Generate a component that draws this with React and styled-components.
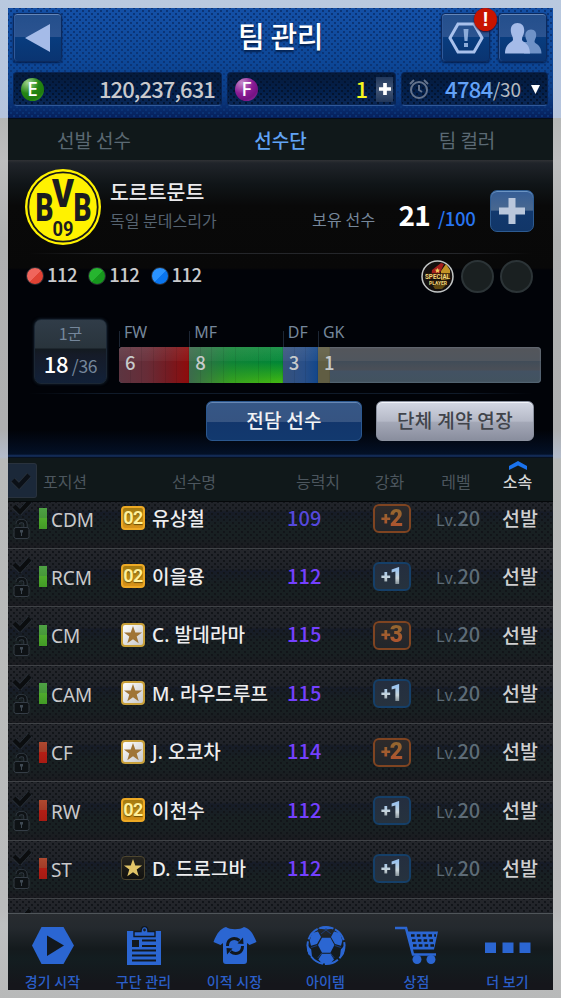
import React from 'react';
import styled, { createGlobalStyle, css } from 'styled-components';

const GlobalStyle = createGlobalStyle`
  * {
    box-sizing: border-box;
  }
  body {
    margin: 0;
    background: #b5b6b6;
    font-family: 'Noto Sans CJK KR', 'Noto Sans', sans-serif;
  }
  svg {
    display: block;
    flex: none;
  }
`;

const Frame = styled.div`
  width: 561px;
  height: 998px;
  padding: 8px;
  background: linear-gradient(#b9c9df 0, #b5c4dd 118px, #b5b7b6 118px, #bdbebf 160px, #b0b1b1 240px, #aeafb0 430px, #b3bccb 457px, #b8bab9 459px, #bbbcbd 910px, #bec0c1 925px, #b8b9b9 100%);
`;

const Screen = styled.div`
  height: 982px;
  overflow: hidden;
  display: flex;
  flex-direction: column;
  background: #010308;
`;

const dots = css`
  background-image: radial-gradient(circle, ${(p) => p.$dot} 0.7px, transparent 1.4px),
    radial-gradient(circle, ${(p) => p.$dot} 0.7px, transparent 1.4px), ${(p) => p.$fill};
  background-size: 6px 6px, 6px 6px, 100% 100%;
  background-position: 0 0, 3px 3px, 0 0;
`;

const Text = styled.span`
  margin-top: -2px;
  font-size: ${(p) => p.$size}px;
  line-height: 1;
  font-weight: ${(p) => p.$weight || 400};
  color: ${(p) => p.$color};
  letter-spacing: ${(p) => p.$spacing || 0}px;
  white-space: nowrap;
`;

/* ---------- header ---------- */

const Header = styled.header`
  height: 110px;
  flex: none;
  padding: 5px 5px 0;
  ${dots}
`;

const TitleBar = styled.div`
  display: grid;
  grid-template-columns: 107px 1fr 107px;
  height: 49px;
  align-items: center;
`;

const Title = styled.h1`
  margin: 0;
  padding-bottom: 5px;
  text-align: center;
  font-size: 29px;
  line-height: 44px;
  font-weight: 500;
  letter-spacing: -0.4px;
  color: #fff;
  text-shadow: 0 2px 2px #04204c;
`;

const HeaderActions = styled.div`
  display: flex;
  gap: 8px;
`;

const IconButton = styled.button`
  position: relative;
  width: 49px;
  height: 49px;
  flex: none;
  padding: 0;
  display: flex;
  align-items: center;
  justify-content: center;
  border: 1px solid #0b2a5f;
  border-radius: 4px;
  background: linear-gradient(#244f8c, #2b5390 48%, #083c7e 50%, #0a3471);
  box-shadow: inset 0 1px 0 #6586b8, inset 1px 0 0 #2f599a, 0 1px 2px #041c48;
`;

const Alert = styled.span`
  position: absolute;
  top: -6px;
  right: -8px;
  width: 23px;
  height: 23px;
  border-radius: 50%;
  background: #c81400;
  box-shadow: 0 1px 2px #24092a;
  color: #fff;
  font: 700 20px/23px 'Liberation Sans', sans-serif;
  text-align: center;
`;

const Wallets = styled.div`
  display: grid;
  grid-template-columns: 209px 169px 147px;
  gap: 5px;
  margin-top: 10px;
`;

const Wallet = styled.div`
  height: 34px;
  padding: 0 6px 0 7px;
  display: flex;
  align-items: center;
  border-radius: 4px;
  border: 1px solid #092454;
  border-bottom-color: #31599a;
  ${dots}
`;

const Coin = styled.span`
  width: 23px;
  height: 23px;
  margin-right: auto;
  border-radius: 50%;
  background: ${(p) => (p.$purple
    ? 'radial-gradient(circle at 30% 20%, #c68ac9, #8b1c96 45%, #751283 70%, #a33cae)'
    : 'radial-gradient(circle at 30% 20%, #a0d58e, #248513 45%, #1f7c0e 70%, #4abb2d)')};
  color: #fff;
  font: 500 19px/22px 'Noto Sans', sans-serif;
  text-align: center;
`;

const PlusBox = styled.span`
  width: 17px;
  height: 25px;
  margin: 0 -4px 0 7px;
  display: flex;
  align-items: center;
  justify-content: center;
  background: linear-gradient(#21375b, #415575, #21375b);
`;

/* ---------- tabs ---------- */

const Tabs = styled.nav`
  height: 42px;
  flex: none;
  display: grid;
  grid-template-columns: 172px 1fr 172px;
  justify-items: center;
  align-items: center;
  padding-top: 2px;
  border-top: 1px solid #050d1b;
  background: #10181a;
`;

/* ---------- team ---------- */

const Team = styled.section`
  height: 298px;
  flex: none;
  background: linear-gradient(#303235 0, #20242a 3px, #101518 24px, #090909 46px, #080808 108px, #010308 110px, #010308 270px, #031026 294px, #173365 296px, #020509 298px);
`;

const TeamTop = styled.div`
  height: 93px;
  padding: 9px 19px 0 17px;
  display: flex;
`;

const TeamName = styled.div`
  width: 211px;
  padding: 14px 0 0 9px;
  display: flex;
  flex-direction: column;
  gap: 12px;
`;

const Roster = styled.div`
  display: flex;
  align-items: baseline;
  padding-top: 31px;
  height: 76px;
  width: 178px;
`;

const AddButton = styled.button`
  width: 44px;
  height: 42px;
  margin-top: 21px;
  padding: 0;
  display: flex;
  align-items: center;
  justify-content: center;
  border: 1px solid #2d5b91;
  border-radius: 7px;
  background: linear-gradient(#355d96, #49688f 48%, #12386d 50%, #113668);
  box-shadow: inset 0 1px 0 #6b94c3;
`;

const Divider = styled.div`
  height: 1px;
  margin: 0 20px;
  background: linear-gradient(90deg, transparent, ${(p) => p.$color} 15%, ${(p) => p.$color} 85%, transparent);
`;

const Skills = styled.div`
  height: 65px;
  padding: 5px 20px 0 18px;
  display: flex;
`;

const Skill = styled.div`
  width: 62.3px;
  height: 33px;
  display: flex;
  align-items: center;
  gap: 3px;
`;

const Orb = styled.span`
  width: 18px;
  height: 18px;
  border-radius: 50%;
  border: 1px solid #272b31;
  background: ${(p) => p.$fill};
`;

const Slots = styled.div`
  display: flex;
  gap: 6.5px;
  margin: 1px 0 0 auto;
`;

const Slot = styled.span`
  width: 33px;
  height: 33px;
  border-radius: 50%;
  border: 2px solid #2c3437;
  background: #1a2021;
`;

const SquadRow = styled.div`
  height: 74px;
  padding: 0 12px 0 26px;
  display: flex;
  gap: 12px;
`;

const GroupCard = styled.div`
  width: 73px;
  height: 65px;
  flex: none;
  border: 1px solid #1b2734;
  border-radius: 7px;
  background: linear-gradient(#303c48 0, #29343c 28px, #131a20 29px, #151b28 35px, #122138 100%);
  box-shadow: 0 0 3px #1a2a3a;
  text-align: center;
  line-height: 1;
`;

const GroupName = styled.div`
  padding-top: 5px;
  height: 32px;
`;

const Breakdown = styled.div`
  width: 422px;
  height: 57px;
  margin-top: 7px;
  display: flex;
  flex-direction: column;
`;

const BarLabels = styled.div`
  height: 21px;
  display: flex;
`;

const BarLabel = styled.div`
  width: ${(p) => p.$cells * 11.7}px;
  margin-top: 5px;
  border-left: 1px solid #1c2634;
  color: #75879b;
  font: 16px/9px 'Noto Sans', sans-serif;
  padding-left: 4px;
  white-space: nowrap;
  & > span {
    position: relative;
    top: -3px;
  }
`;

const Bar = styled.div`
  height: 36px;
  display: flex;
  border-radius: 4px;
  overflow: hidden;
  background: linear-gradient(#54565b, #50565e 38%, #414c58 40%, #4a4f57 62%, #435263 68%, #42535f);
  box-shadow: inset 0 0 2px #8390a0;
`;

const Segment = styled.div`
  width: ${(p) => p.$cells * 11.7}px;
  padding: 6px 0 0 6px;
  line-height: 1;
  background: repeating-linear-gradient(90deg, transparent 0, transparent 10.7px, rgba(0, 0, 0, 0.08) 10.7px, rgba(0, 0, 0, 0.08) 11.7px),
    linear-gradient(rgba(255, 255, 255, 0.09), rgba(255, 255, 255, 0.04) 38%, transparent 40%), ${(p) => p.$fill};
`;

const Actions = styled.div`
  display: flex;
  justify-content: flex-end;
  gap: 14px;
  padding: 7px 19px 0;
`;

const ActionButton = styled.button`
  width: ${(p) => (p.$light ? 158 : 156)}px;
  height: 40px;
  padding: 0 0 3px;
  border-radius: 6px;
  border: 1px solid ${(p) => (p.$light ? '#8b919f' : '#2b578e')};
  background: ${(p) => (p.$light
    ? 'linear-gradient(#d3d7e3, #b5b9c7 50%, #a3a7b6 54%, #898e9e)'
    : 'linear-gradient(#365786, #365482 52%, #12366c 54%, #12396e)')};
  box-shadow: inset 0 1px 0 ${(p) => (p.$light ? '#f3f5fb' : '#6888b4')};
  color: ${(p) => (p.$light ? '#41444b' : '#f2f3f5')};
  font: 500 19px/34px 'Noto Sans CJK KR', sans-serif;
  letter-spacing: 0.3px;
`;

/* ---------- players ---------- */

const TableHead = styled.div`
  height: 44px;
  flex: none;
  display: grid;
  grid-template-columns: 29px 56px 202px 46px 97px 36px 1fr;
  align-items: center;
  justify-items: center;
  padding-top: 2px;
  background: #10181a;
  border-bottom: 1px solid #05080a;
  color: #4c565e;
  font-size: 16px;
  line-height: 20px;
`;

const CheckAll = styled.div`
  width: 29px;
  height: 35px;
  padding-right: 3px;
  justify-self: start;
  display: flex;
  align-items: center;
  justify-content: center;
  border-radius: 0 3px 3px 0;
  border: 1px solid #29323d;
  border-left: 0;
  background: #1b2839;
`;

const SortCell = styled.div`
  position: relative;
  margin-left: 8px;
  color: #d6d7d8;
  font-weight: 500;
  svg {
    position: absolute;
    left: 6px;
    top: -10px;
  }
`;

const List = styled.div`
  height: 411px;
  flex: none;
  overflow: hidden;
  background: #1b1f24;
`;

const Rows = styled.div`
  margin-top: -12.6px;
`;

const Row = styled.div`
  height: 58.4px;
  display: grid;
  grid-template-columns: 31px 13px 69px 31px 135px 86px 63px 66px 1fr;
  align-items: center;
  padding-bottom: 1px;
  border-top: 1px solid #3f4246;
  ${dots}
`;

const Marks = styled.div`
  display: flex;
  flex-direction: column;
  align-items: center;
  gap: 4px;
  padding-right: 4px;
`;

const PosBar = styled.span`
  width: 8px;
  height: 21px;
  background: ${(p) => (p.$attack
    ? 'linear-gradient(#ae4930 0, #a33b27 48%, #b31e15 50%, #a71b13 100%)'
    : 'linear-gradient(#4ea144 0, #479739 48%, #4fab2c 50%, #429b26 100%)')};
`;

const Position = styled.span`
  padding-top: 2px;
  color: #c9c9cb;
  font: 19px/20px 'Noto Sans', sans-serif;
  letter-spacing: -0.1px;
  margin-left: -1px;
`;

const seasonFills = {
  '02': 'linear-gradient(#a47a10, #b98a15 48%, #d9931a)',
  wb: 'linear-gradient(135deg, #fff, #e2e2e2 50%, #c8c8c8)',
  legend: 'linear-gradient(#25241f, #11110f)',
};
const seasonEdges = { '02': '#eda924', wb: '#c8a03a', legend: '#4e462f' };

const Season = styled.span`
  width: 24px;
  height: 24px;
  margin-top: -1px;
  display: flex;
  align-items: center;
  justify-content: center;
  border-radius: 4px;
  border: ${(p) => (p.$kind === 'legend' ? 1 : 2)}px solid ${(p) => seasonEdges[p.$kind]};
  background: ${(p) => seasonFills[p.$kind]};
  color: #fff09a;
  font: 700 18px/20px 'Roboto', sans-serif;
  letter-spacing: -0.6px;
  text-shadow: 0 1px 1px #6b4d05;
`;

const Name = styled.span`
  color: #eeeeef;
  font: 500 19px/24px 'Noto Sans', 'Noto Sans CJK KR', sans-serif;
  letter-spacing: 0.15px;
  white-space: nowrap;
`;

const Enhance = styled.span`
  width: 38px;
  height: 29px;
  display: flex;
  align-items: center;
  justify-content: center;
  border-radius: 6px;
  border: 2px solid ${(p) => (p.$bronze ? '#7f4421' : '#153f68')};
  background: ${(p) => (p.$bronze ? 'linear-gradient(#2e2a2a, #22262b)' : 'linear-gradient(#242e3f, #26323e)')};
`;

const EnhanceText = styled.span`
  display: flex;
  align-items: center;
  font: 900 23px/24px 'Roboto', sans-serif;
  color: transparent;
  background: ${(p) => (p.$bronze ? 'linear-gradient(#95652f 20%, #ad552f 75%)' : 'linear-gradient(#9cc4ee 20%, #c9d5da 55%, #838f96 80%)')};
  background-clip: text;
  small {
    font-size: 18px;
    margin-right: -1px;
  }
`;

const Level = styled.span`
  display: flex;
  align-items: baseline;
  color: #5d6b76;
`;

/* ---------- bottom nav ---------- */

const BottomNav = styled.nav`
  height: 77px;
  flex: none;
  display: flex;
  margin-left: -1px;
  border-top: 1px solid #50565a;
  background: linear-gradient(#282c30 0, #24292e 14px, #141a1d 35px, #131d20 45px, #15161b 70px);
`;

const NavItem = styled.div`
  width: 91px;
  padding-top: 11px;
  display: flex;
  flex-direction: column;
  align-items: center;
  gap: 6px;
  color: #2b5fc9;
  font-size: 14px;
  line-height: 16px;
  font-weight: 500;
  letter-spacing: 0.2px;
`;

const Check = ({ color = '#0b0d0f' }) => (
  <svg width="20" height="17" viewBox="0 0 20 17">
    <path d="M2 8l6 6L18 3" fill="none" stroke="#2a323b" strokeWidth="5.800" />
    <path d="M2 8l6 6L18 3" fill="none" stroke={color} strokeWidth="4.300" />
  </svg>
);

const Lock = () => (
  <svg width="17" height="20" viewBox="0 0 17 20">
    <path d="M4.500 5C5 1 12.500 1 12.500 5.500V9" fill="none" stroke="#343c45" strokeWidth="4.200" />
    <path d="M4.500 5C5 1 12.500 1 12.500 5.500V9" fill="none" stroke="#0e1215" strokeWidth="2.400" />
    <rect x="1" y="8.500" width="15" height="11" rx="2" fill="#0e1215" stroke="#343c45" />
    <path d="M7 11h3v2.500H9V17H8v-3.500H7z" fill="#3f4953" />
  </svg>
);

const Star = ({ color }) => (
  <svg width="20" height="20" viewBox="0 0 20 20">
    <path d="M10 1l2.300 6.400 6.800.1-5.400 4.100 2 6.600-5.700-3.900-5.700 3.900 2-6.600L.9 7.500l6.800-.1z" fill={color} />
  </svg>
);

const Plus = ({ size, width, color = '#fff' }) => (
  <svg width={size} height={size} viewBox="0 0 26 26">
    <path d="M13 0v26M0 13h26" stroke={color} strokeWidth={width} />
  </svg>
);

const Crest = () => (
  <svg width="76" height="76" viewBox="0 0 76 76">
    <circle cx="38" cy="38" r="38" fill="#fff200" />
    <circle cx="38" cy="38" r="34.700" fill="none" stroke="#17181a" strokeWidth="1.800" />
    <g fill="#1b1c20" fontFamily="Roboto, sans-serif" fontWeight="900">
      <text x="10.500" y="51.500" fontSize="38" textLength="18" lengthAdjust="spacingAndGlyphs">B</text>
      <text x="27" y="37.500" fontSize="38" textLength="22" lengthAdjust="spacingAndGlyphs">V</text>
      <text x="48.500" y="51.500" fontSize="38" textLength="18" lengthAdjust="spacingAndGlyphs">B</text>
      <text x="27.500" y="67" fontSize="20" fontWeight="700" textLength="21" lengthAdjust="spacingAndGlyphs">09</text>
    </g>
  </svg>
);

const SpecialBadge = () => (
  <svg width="33" height="33" viewBox="0 0 33 33">
    <circle cx="16.500" cy="16.500" r="15.500" fill="#14100f" stroke="#c2c6c6" strokeWidth="1.500" />
    <path d="M11 10l9-7 3 1-6 13-7 2z" fill="#a51f1c" />
    <path d="M20 11l5-7 4 6v9l-9 1z" fill="#c39425" />
    <path d="M12 26l9-4 5 2-5 5h-7z" fill="#604811" />
    <path d="M16.500 8l.8 1.600 1.700.2-1.200 1.200.3 1.700-1.600-.8-1.600.8.3-1.700-1.200-1.200 1.700-.2z" fill="#efc95a" />
    <path d="M4 13h25v6H4zM8 20h18v5H8z" fill="#2b1908" fillOpacity=".75" />
    <g fill="#f0d67a" fontFamily="Roboto, sans-serif" fontWeight="700">
      <text x="4" y="18.700" fontSize="7.500" textLength="25" lengthAdjust="spacingAndGlyphs">SPECIAL</text>
      <text x="8" y="24.500" fontSize="5.800" textLength="18" lengthAdjust="spacingAndGlyphs">PLAYER</text>
    </g>
  </svg>
);

const navItems = [
  {
    label: '경기 시작',
    icon: (
      <>
        <path d="M10.500 2h22L43 20.500 32.500 39h-22L1 20.500z" />
        <path d="M16 10.500l17 10-17 10.500z" fill="#12181e" />
      </>
    ),
  },
  {
    label: '구단 관리',
    icon: (
      <>
        <path d="M5 6h34v34H5z" />
        <path d="M12 11.500V6.500h7C19 0 26 0 26 6.500h7v5z" stroke="#12181e" strokeWidth="1.400" />
        <circle cx="22.500" cy="5" r="1.400" fill="#172028" />
        <path d="M10 15h7v7h-7z" fill="#12181e" />
        <path d="M20 15.500h14M20 21h14M10 25.500h24M10 30.500h24M10 35.500h24" stroke="#12181e" strokeWidth="2" />
      </>
    ),
  },
  {
    label: '이적 시장',
    icon: (
      <>
        <path d="M13 2c4 3 14 3 18 0 6 2 9 6 12.500 15l-7 3-2.500-2v18q0 3-3 3H13q-3 0-3-3V18l-2.500 2-7-3C4 8 7 4 13 2z" />
        <g fill="none" stroke="#12181e" strokeWidth="3">
          <path d="M14.500 21c0-7 6.500-9.500 12-5.500M29.500 21c0 7-6.500 9.500-12 5.500" />
        </g>
        <path d="M24.500 18.500l6 .5-.5-6.500zM19.500 23.500l-6-.5.5 6.500z" fill="#12181e" />
      </>
    ),
  },
  {
    label: '아이템',
    icon: (
      <>
        <circle cx="22" cy="20.500" r="18.500" fill="none" stroke="#2b66d2" strokeWidth="2" strokeDasharray="14 2" />
        <path d="M18 12.700h8.400l4 7.300-4 7.700H18L14 20z" />
        <path d="M5.700 15.700L8 8l6-1.500 3 5.500-4 7-6 1.700zM38.300 15.700L36 8l-6-1.500-3 5.500 4 7 6 1.700z" />
        <path d="M18 28.800h8.400l3.600 5.700-3.600 4H18l-3.600-4z" />
        <path d="M2.700 19.500l4.500 5 1 8.500-4-4zM41.300 19.500l-4.500 5-1 8.500 4-4zM13.700 3.500l6-2h4.600l6 2-8.300 1z" />
        <path d="M7.200 22.500l6-2M36.800 22.500l-6-2M13.700 33l4-5M30.300 33l-4-5M22 3v2l-5 4M22 5l5 4" fill="none" stroke="#1d438c" strokeWidth=".8" />
      </>
    ),
  },
  {
    label: '상점',
    icon: (
      <>
        <path d="M0 3h11l7 26.500h23" fill="none" stroke="#2b66d2" strokeWidth="2.600" />
        <path d="M12.500 6.500H43L39 24.500H17z" />
        <path d="M16 10.500h25M17 15.500h23M18 20.500h21" stroke="#12181e" strokeWidth="2.400" strokeDasharray="3.600 2.200" />
        <circle cx="22" cy="34.500" r="4.500" />
        <circle cx="36" cy="34.500" r="4.500" />
      </>
    ),
  },
  {
    label: '더 보기',
    icon: <path d="M-1 17.500h11v10.500H-1zM16.500 17.500h11v10.500h-11zM33.500 17.500h11v10.500h-11z" />,
  },
];

const players = [
  { pos: 'CDM', season: '02', name: '유상철', rating: 109, plus: 2 },
  { pos: 'RCM', season: '02', name: '이을용', rating: 112, plus: 1 },
  { pos: 'CM', season: 'wb', name: 'C. 발데라마', rating: 115, plus: 3 },
  { pos: 'CAM', season: 'wb', name: 'M. 라우드루프', rating: 115, plus: 1 },
  { pos: 'CF', season: 'wb', name: 'J. 오코차', rating: 114, plus: 2, attack: true },
  { pos: 'RW', season: '02', name: '이천수', rating: 112, plus: 1, attack: true },
  { pos: 'ST', season: 'legend', name: 'D. 드로그바', rating: 112, plus: 1, attack: true },
];

const segments = [
  { label: 'FW', count: 6, fill: 'linear-gradient(90deg, #5c3541, #672c37 40%, #741b22 70%, #8f0b0b)' },
  { label: 'MF', count: 8, fill: 'linear-gradient(90deg, #3c6a4c, rgba(30, 130, 50, 0.5) 45%, rgba(0, 145, 40, 0.2)), linear-gradient(#0d8a40 0, #00843a 42%, #26a322 70%, #55c40a)' },
  { label: 'DF', count: 3, fill: 'linear-gradient(90deg, #37527c, #294f88 60%, #12468a)' },
  { label: 'GK', count: 1, fill: '#605d43' },
];

const rowFill = 'linear-gradient(#24262b 0, #1f2228 35%, #171c28 38%, #182022 60%, #182022 80%, #1b1b20 100%)';
const walletFill = 'linear-gradient(#061a3a, #03204c 60%, #0a2756)';

const PlayerRow = ({ player }) => {
  const bronze = player.plus > 1;
  return (
    <Row $dot="#121519" $fill={rowFill}>
      <Marks>
        <Check />
        <Lock />
      </Marks>
      <PosBar $attack={player.attack} />
      <Position>{player.pos}</Position>
      <Season $kind={player.season}>
        {player.season === '02' ? '02' : <Star color={player.season === 'wb' ? '#a07536' : '#e2c568'} />}
      </Season>
      <Name>{player.name}</Name>
      <Text $size={20} $weight={500} $spacing={0.1} $color={player.rating < 110 ? '#5548dc' : '#7440ff'}>
        {player.rating}
      </Text>
      <Enhance $bronze={bronze}>
        <EnhanceText $bronze={bronze}>
          <small>+</small>
          {player.plus}
        </EnhanceText>
      </Enhance>
      <Level>
        <Text $size={16} $spacing={0.4}>Lv.</Text>
        <Text $size={20} $weight={500}>20</Text>
      </Level>
      <Text $size={19.5} $weight={500} $color="#cfcfd0">선발</Text>
    </Row>
  );
};

const App = () => (
  <>
    <GlobalStyle />
    <Frame>
      <Screen>
        <Header $dot="#0b3476" $fill="linear-gradient(#1450a6, #0d4797 50%, #0a3b84 80%, #061f5a)">
          <TitleBar>
            <IconButton>
              <svg width="25" height="30" viewBox="0 0 25 30">
                <path d="M0 15L25 1v28z" fill="#a5bbe8" />
              </svg>
            </IconButton>
            <Title>팀 관리</Title>
            <HeaderActions>
              <IconButton>
                <svg width="36" height="32" viewBox="0 0 36 32">
                  <path d="M10 2h16l8 14-8 14H10L2 16z" fill="none" stroke="#a9c1ec" strokeWidth="3" />
                  <path d="M15.500 7h5l-1 12h-3zM16 21h4v4h-4z" fill="#8cabd9" />
                </svg>
                <Alert>!</Alert>
              </IconButton>
              <IconButton>
                <svg width="38" height="32" viewBox="0 0 38 32">
                  <path d="M27 7.500c4 0 6 3 5 7.500-.5 2-1.500 3-1.500 5 1 2 7 3 7 11.500H20V20h3c0-2-1.500-3-1.500-5-1-4 1.500-7.500 5.500-7.500z" fill="#6f92c7" />
                  <path d="M13.500 1c5 0 7.500 4 6.500 9.500-.5 3-2 4-2 7 0 3 8 3 8 14H1c0-11 8-11 8-14 0-3-1.500-4-2-7C6 5 8.500 1 13.500 1z" fill="#a5bbe8" />
                </svg>
              </IconButton>
            </HeaderActions>
          </TitleBar>
          <Wallets>
            <Wallet $dot="#03142f" $fill={walletFill}>
              <Coin>E</Coin>
              <Text $size={22} $weight={500} $spacing={-0.9} $color="#c9c9cc">120,237,631</Text>
            </Wallet>
            <Wallet $dot="#03142f" $fill={walletFill}>
              <Coin $purple>F</Coin>
              <Text $size={22} $weight={500} $color="#f6f71c" style={{ marginRight: 1 }}>1</Text>
              <PlusBox>
                <Plus size={12} width={8} />
              </PlusBox>
            </Wallet>
            <Wallet $dot="#03142f" $fill={walletFill}>
              <svg width="20" height="21" viewBox="0 0 20 21" fill="none" stroke="#64738c" strokeWidth="2">
                <circle cx="10" cy="11" r="8" />
                <path d="M10 6v5l3 2M1 5l4-4M19 5l-4-4" />
              </svg>
              <Text $size={22} $weight={500} $spacing={-0.6} $color="#63a2f7" style={{ marginLeft: 'auto' }}>4784</Text>
              <Text $size={19} $weight={400} $spacing={-0.1} $color="#b6babf" style={{ marginRight: 10 }}>/30</Text>
              <svg width="10" height="10" viewBox="0 0 10 10">
                <path d="M0 1h9L4.500 10z" fill="#fff" />
              </svg>
            </Wallet>
          </Wallets>
        </Header>

        <Tabs>
          <Text $size={19} $color="#5b6973">선발 선수</Text>
          <Text $size={19} $weight={500} $color="#61a3f5">선수단</Text>
          <Text $size={19} $color="#5b6973">팀 컬러</Text>
        </Tabs>

        <Team>
          <TeamTop>
            <Crest />
            <TeamName>
              <Text $size={20.5} $weight={500} $color="#ecebed">도르트문트</Text>
              <Text $size={16} $color="#566370">독일 분데스리가</Text>
            </TeamName>
            <Roster>
              <Text $size={16} $spacing={0.2} $color="#76879a">보유 선수</Text>
              <Text $size={28} $weight={700} $spacing={-0.8} $color="#fff" style={{ margin: '0 8px 0 23px' }}>21</Text>
              <Text $size={18.5} $weight={500} $spacing={-0.3} $color="#2875f0">/100</Text>
            </Roster>
            <AddButton>
              <Plus size={26} width={7} color="#bac7dc" />
            </AddButton>
          </TeamTop>
          <Divider $color="#24262a" />
          <Skills>
            {['linear-gradient(135deg, #f0655c 50%, #e04234 52%)', 'linear-gradient(135deg, #26b52f 50%, #16961d 52%)', 'linear-gradient(135deg, #2a93ff 50%, #0a75ee 52%)'].map((fill) => (
              <Skill key={fill}>
                <Orb $fill={fill} />
                <Text $size={18.5} $weight={500} $spacing={-0.6} $color="#c9cacc">112</Text>
              </Skill>
            ))}
            <Slots>
              <SpecialBadge />
              <Slot />
              <Slot />
            </Slots>
          </Skills>
          <SquadRow>
            <GroupCard>
              <GroupName>
                <Text $size={16} $color="#75879b">1군</Text>
              </GroupName>
              <Text $size={22} $weight={500} $spacing={-0.3} $color="#fff">18</Text>{' '}
              <Text $size={17.5} $spacing={-0.3} $color="#75879b">/36</Text>
            </GroupCard>
            <Breakdown>
              <BarLabels>
                {segments.map((s) => (
                  <BarLabel key={s.label} $cells={s.count}>
                    <span>{s.label}</span>
                  </BarLabel>
                ))}
              </BarLabels>
              <Bar>
                {segments.map((s) => (
                  <Segment key={s.label} $cells={s.count} $fill={s.fill}>
                    <Text $size={18.5} $weight={500} $color="#c6cacb">{s.count}</Text>
                  </Segment>
                ))}
              </Bar>
            </Breakdown>
          </SquadRow>
          <Divider $color="#101b2a" />
          <Actions>
            <ActionButton>전담 선수</ActionButton>
            <ActionButton $light>단체 계약 연장</ActionButton>
          </Actions>
        </Team>

        <TableHead>
          <CheckAll>
            <Check color="#0b1017" />
          </CheckAll>
          <span>포지션</span>
          <span>선수명</span>
          <span>능력치</span>
          <span>강화</span>
          <span>레벨</span>
          <SortCell>
            소속
            <svg width="18" height="9" viewBox="0 0 18 9">
              <path d="M0 5l9-5 9 5v4L9 4.500 0 9z" fill="#1a73ee" />
            </svg>
          </SortCell>
        </TableHead>

        <List>
          <Rows>
            {players.map((p) => (
              <PlayerRow key={p.pos} player={p} />
            ))}
            <Row $dot="#121519" $fill={rowFill}>
              <Marks>
                <Check />
                <Lock />
              </Marks>
            </Row>
          </Rows>
        </List>

        <BottomNav>
          {navItems.map((item) => (
            <NavItem key={item.label}>
              <svg width="44" height="42" viewBox="0 0 44 42" fill="#2b66d2" overflow="visible">
                {item.icon}
              </svg>
              {item.label}
            </NavItem>
          ))}
        </BottomNav>
      </Screen>
    </Frame>
  </>
);

export default App;
